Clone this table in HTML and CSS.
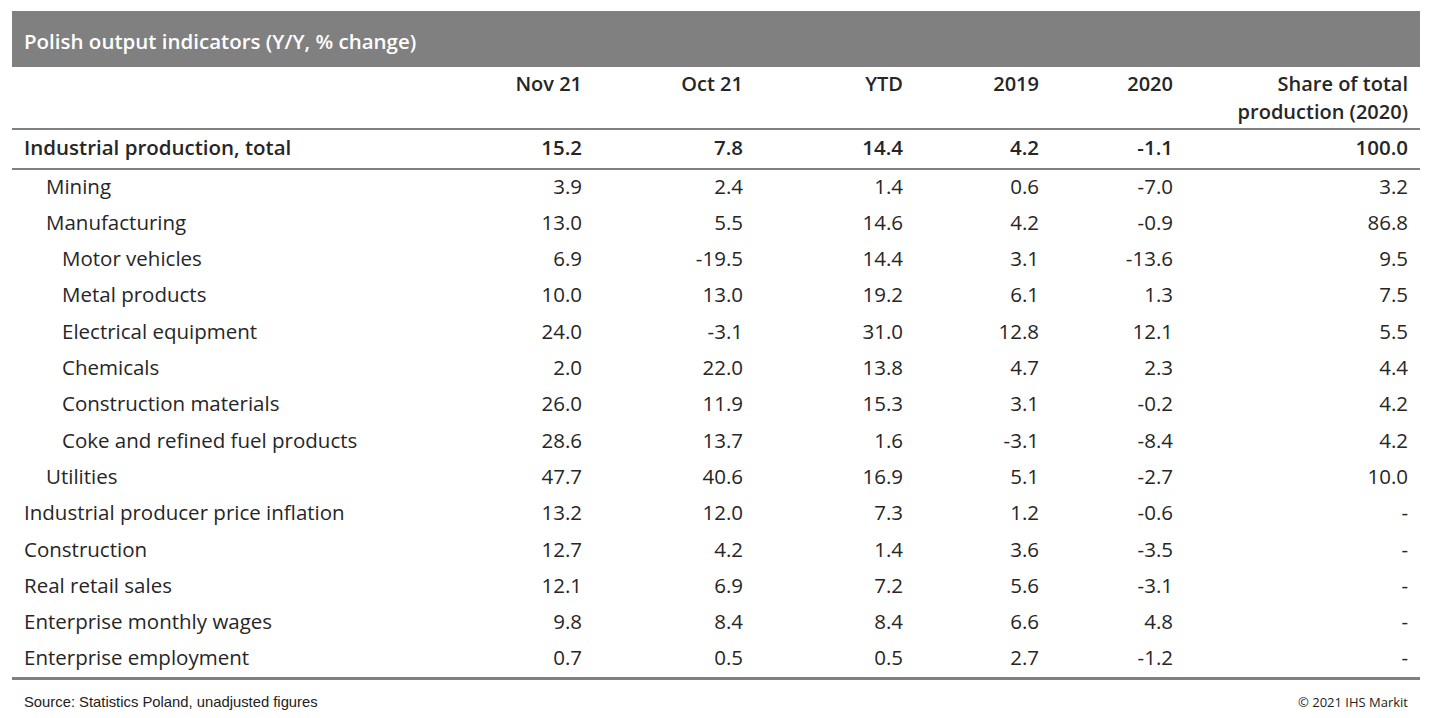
FILE: index.html
```html
<!DOCTYPE html>
<html lang="en">
<head>
<meta charset="utf-8">
<title>Polish output indicators</title>
<link rel="stylesheet" href="styles.css">
</head>
<body>
<div class="wrap">
  <div class="title">Polish output indicators (Y/Y, % change)</div>
  <table class="data">
    <colgroup>
      <col class="c-label"><col class="c-a"><col class="c-b"><col class="c-c"><col class="c-d"><col class="c-e"><col class="c-f">
    </colgroup>
    <thead>
      <tr>
        <th></th>
        <th>Nov 21</th>
        <th>Oct 21</th>
        <th>YTD</th>
        <th>2019</th>
        <th>2020</th>
        <th>Share of total<br>production (2020)</th>
      </tr>
    </thead>
    <tbody>
      <tr class="total"><td>Industrial production, total</td><td>15.2</td><td>7.8</td><td>14.4</td><td>4.2</td><td>-1.1</td><td>100.0</td></tr>
      <tr class="l1 first"><td>Mining</td><td>3.9</td><td>2.4</td><td>1.4</td><td>0.6</td><td>-7.0</td><td>3.2</td></tr>
      <tr class="l1"><td>Manufacturing</td><td>13.0</td><td>5.5</td><td>14.6</td><td>4.2</td><td>-0.9</td><td>86.8</td></tr>
      <tr class="l2"><td>Motor vehicles</td><td>6.9</td><td>-19.5</td><td>14.4</td><td>3.1</td><td>-13.6</td><td>9.5</td></tr>
      <tr class="l2"><td>Metal products</td><td>10.0</td><td>13.0</td><td>19.2</td><td>6.1</td><td>1.3</td><td>7.5</td></tr>
      <tr class="l2"><td>Electrical equipment</td><td>24.0</td><td>-3.1</td><td>31.0</td><td>12.8</td><td>12.1</td><td>5.5</td></tr>
      <tr class="l2"><td>Chemicals</td><td>2.0</td><td>22.0</td><td>13.8</td><td>4.7</td><td>2.3</td><td>4.4</td></tr>
      <tr class="l2"><td>Construction materials</td><td>26.0</td><td>11.9</td><td>15.3</td><td>3.1</td><td>-0.2</td><td>4.2</td></tr>
      <tr class="l2"><td>Coke and refined fuel products</td><td>28.6</td><td>13.7</td><td>1.6</td><td>-3.1</td><td>-8.4</td><td>4.2</td></tr>
      <tr class="l1"><td>Utilities</td><td>47.7</td><td>40.6</td><td>16.9</td><td>5.1</td><td>-2.7</td><td>10.0</td></tr>
      <tr><td>Industrial producer price inflation</td><td>13.2</td><td>12.0</td><td>7.3</td><td>1.2</td><td>-0.6</td><td>-</td></tr>
      <tr><td>Construction</td><td>12.7</td><td>4.2</td><td>1.4</td><td>3.6</td><td>-3.5</td><td>-</td></tr>
      <tr><td>Real retail sales</td><td>12.1</td><td>6.9</td><td>7.2</td><td>5.6</td><td>-3.1</td><td>-</td></tr>
      <tr><td>Enterprise monthly wages</td><td>9.8</td><td>8.4</td><td>8.4</td><td>6.6</td><td>4.8</td><td>-</td></tr>
      <tr class="last"><td>Enterprise employment</td><td>0.7</td><td>0.5</td><td>0.5</td><td>2.7</td><td>-1.2</td><td>-</td></tr>
    </tbody>
  </table>
  <div class="footer">
    <span class="source">Source: Statistics Poland, unadjusted figures</span>
    <span class="copy">© 2021 IHS Markit</span>
  </div>
</div>
</body>
</html>
```

FILE: styles.css
```css
html, body {
  margin: 0;
  padding: 0;
  background: #ffffff;
}

.wrap {
  padding: 11px 12px 0 12px;
  width: 1408px;
  font-family: "Open Sans", Lato, sans-serif;
  color: #262626;
}

.title {
  background: #808080;
  color: #ffffff;
  font-weight: 600;
  font-size: 20.5px;
  height: 56px;
  line-height: 60px;
  padding-left: 12px;
  box-sizing: border-box;
}

.data {
  width: 1408px;
  border-collapse: collapse;
  table-layout: fixed;
  font-size: 20.5px;
}

.c-label { width: 448px; }
.c-a { width: 134px; }
.c-b { width: 161px; }
.c-c { width: 160px; }
.c-d { width: 136px; }
.c-e { width: 134px; }
.c-f { width: 235px; }

.data th {
  font-weight: 600;
  font-size: 20px;
  text-align: right;
  vertical-align: top;
  padding: 3px 12px 0 0;
  line-height: 28px;
  height: 62px;
  box-sizing: border-box;
  border-bottom: 2px solid #808080;
}

.data td {
  height: 36.36px;
  padding: 0 12px 4px 0;
  text-align: right;
  line-height: 22px;
  box-sizing: border-box;
  white-space: nowrap;
}

.data td:first-child {
  text-align: left;
  padding-left: 12px;
}

.data tr.total td {
  font-weight: 600;
  height: 40px;
  padding-top: 0;
  padding-bottom: 5px;
  border-bottom: 2px solid #808080;
}

.data tr.l1 td:first-child { padding-left: 34px; }
.data tr.l2 td:first-child { padding-left: 50px; }

.data tr.last td {
  border-bottom: 3px solid #808080;
}

.footer {
  display: flex;
  justify-content: space-between;
  align-items: center;
  height: 40px;
  padding: 4px 12px 0 12px;
  box-sizing: border-box;
  color: #222222;
}

.source {
  font-family: "Liberation Sans", Arial, sans-serif;
  font-size: 14.8px;
}

.copy {
  font-family: "Open Sans", Lato, sans-serif;
  font-size: 13px;
}
```
